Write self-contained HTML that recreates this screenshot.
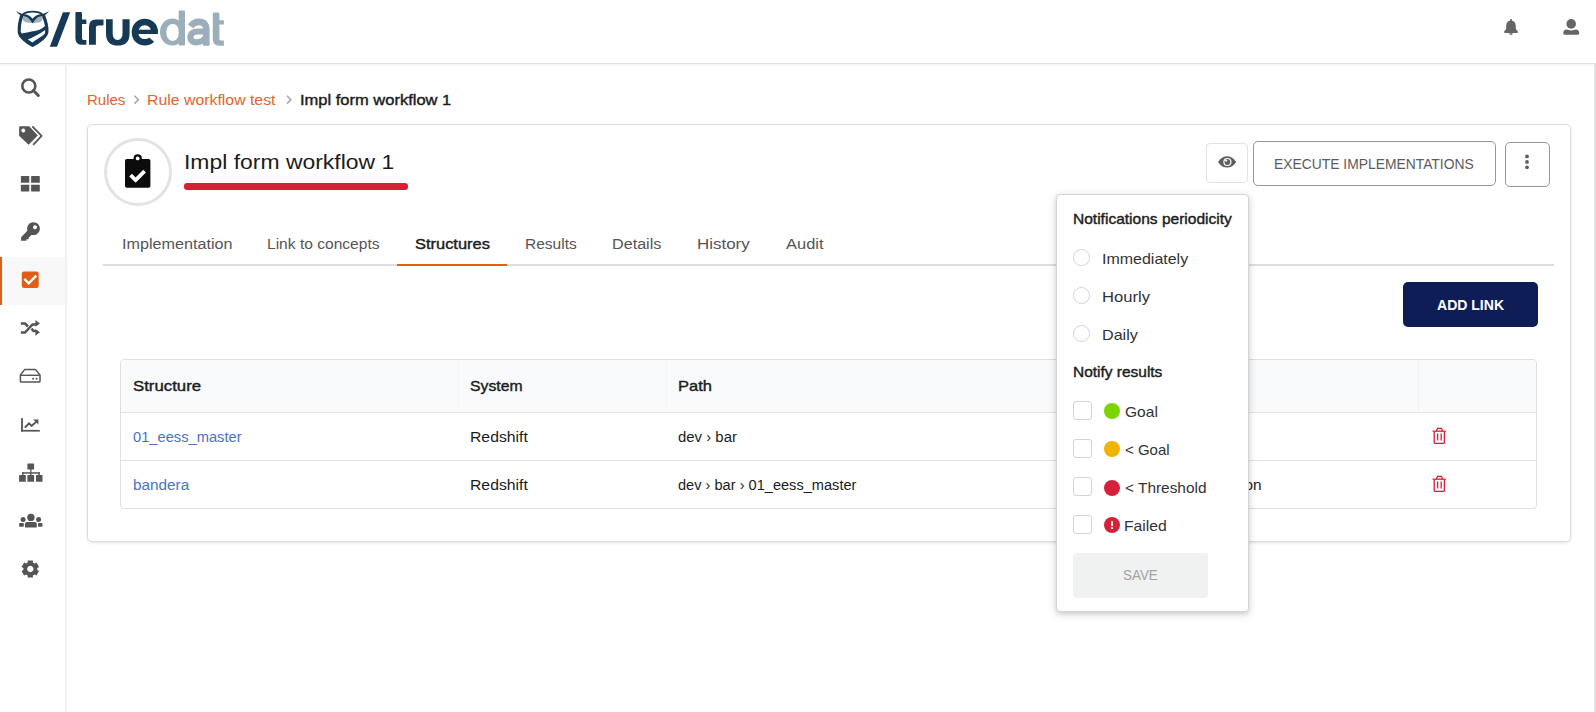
<!DOCTYPE html>
<html><head><meta charset="utf-8">
<style>
*{box-sizing:border-box;margin:0;padding:0}
html,body{width:1596px;height:712px;overflow:hidden;background:#fff;font-family:"Liberation Sans",sans-serif;color:#212121}
.a{position:absolute}
.t{position:absolute;white-space:nowrap;line-height:1;transform-origin:0 0}
svg{position:absolute;left:0;top:0;overflow:visible}
</style></head><body>
<!-- header -->
<div class="a" style="left:0;top:0;width:1596px;height:64px;border-bottom:1px solid #e2e2e2;box-shadow:0 1px 3px rgba(0,0,0,.06)"></div>
<!-- sidebar -->
<div class="a" style="left:65px;top:64px;width:1px;height:648px;background:#eeeeee;box-shadow:1px 0 0 #f6f6f6,2px 0 0 #fafafa"></div>
<div class="a" style="left:0;top:257px;width:65px;height:48px;background:#f8f8f8"></div>
<div class="a" style="left:0;top:257px;width:1.5px;height:48px;background:#e05d1a"></div>
<!-- right edge -->
<div class="a" style="left:1594px;top:64px;width:2px;height:648px;background:#e4e4e4"></div>

<!-- card -->
<div class="a" style="left:87.3px;top:124px;width:1483.7px;height:418px;border:1px solid #dcdcdc;border-radius:5px;box-shadow:0 1px 3px rgba(34,36,38,.13)"></div>
<!-- circle -->
<div class="a" style="left:104px;top:138px;width:68px;height:68px;border:3px solid #e3e3e3;border-radius:50%"></div>
<!-- red bar -->
<div class="a" style="left:184px;top:183.2px;width:224.3px;height:6.4px;background:#d42138;border-radius:3px"></div>
<!-- eye btn -->
<div class="a" style="left:1206px;top:143px;width:42px;height:40px;border:1px solid #e2e2e2;border-radius:4px"></div>
<!-- execute btn -->
<div class="a" style="left:1252.6px;top:141.2px;width:243px;height:44.6px;border:1px solid #979797;border-radius:5px"></div>
<!-- kebab btn -->
<div class="a" style="left:1504.8px;top:142.2px;width:44.8px;height:44.6px;border:1px solid #979797;border-radius:5px"></div>
<!-- tab line -->
<div class="a" style="left:103px;top:264px;width:1450.5px;height:2px;background:#dedede"></div>
<div class="a" style="left:397.3px;top:264px;width:110.2px;height:2px;background:#e26203"></div>
<!-- add link -->
<div class="a" style="left:1402.5px;top:282px;width:135px;height:45px;background:#0f1d57;border-radius:5px"></div>
<!-- table -->
<div class="a" style="left:119.6px;top:359px;width:1417.4px;height:150px;border:1px solid #e0e0e0;border-radius:4px;overflow:hidden">
  <div class="a" style="left:0;top:0;width:1416px;height:53px;background:#f9fafb;border-bottom:1px solid #e3e3e3"></div>
  <div class="a" style="left:0;top:100px;width:1416px;height:1px;background:#e3e3e3"></div>
  <div class="a" style="left:1297px;top:0;width:1px;height:53px;background:#f1f2f3"></div>
  <div class="a" style="left:337.4px;top:0;width:1px;height:52px;background:#f5f6f7"></div>
  <div class="a" style="left:545.4px;top:0;width:1px;height:52px;background:#f5f6f7"></div>
</div>

<svg width="1596" height="712" viewBox="0 0 1596 712">
  <!-- logo owl -->
  <path d="M22.4,16.6 C24.5,16.2 28,16.8 30.6,19.6 L32.6,23 C29.2,23.2 26,22.8 24.3,21.6 C22.9,20.6 22.4,19 22.4,16.6 Z" fill="#9fb2bd"/>
  <path d="M42.8,16.6 C40.7,16.2 37.2,16.8 34.6,19.6 L32.6,23 C36,23.2 39.2,22.8 40.9,21.6 C42.3,20.6 42.8,19 42.8,16.6 Z" fill="#9fb2bd"/>
  <path d="M18.6,34.8 C24,32.6 30,32 36,30.8 C40,30 42.8,28.2 46.6,24.6 L47.8,31.6 L32.6,46.4 L19.5,36.5 Z" fill="#163a56"/>
  <path d="M27.8,39.6 C33,37.2 39,34.6 45.5,29.8 L45.5,33.6 C40.5,37 36.5,39.6 32.4,42.5 Z" fill="#fff"/>
  <path d="M16.2,11.1 C19,13 22,14.2 25,14.3 C28,14.4 30.6,16.4 32.6,18.8 C34.6,16.4 37.2,14.4 40.2,14.3 C43.2,14.2 46.2,13 49.1,11.1 C47.4,14.2 44,16.3 40.6,16.5 C37.6,16.7 35,19.5 32.6,23.6 C30.2,19.5 27.6,16.7 24.6,16.5 C21.2,16.3 17.8,14.2 16.2,11.1 Z" fill="#163a56"/>
  <g fill="none" stroke="#163a56" stroke-linecap="round">
    <path d="M22.8,14.6 C26.4,10.6 38.8,10.6 42.4,14.6" stroke-width="1.9"/>
    <path d="M21.5,16.2 C20,21 18.8,26 19.3,32 C19.8,36.5 26,42 32.6,45.2 C39.2,42 46.4,36.5 46.9,31.8 C47.2,26.5 45.8,21.5 43.7,16.2" stroke-width="3.2"/>
  </g>
  <path d="M62.9,12.2 L70.2,12.2 L57,46.7 L49.8,46.7 Z" fill="#163a56"/>
  <g fill="#163a56">
    <path d="M75.4,13 Q75.4,12 76.4,12 L80.6,12 Q82,12 82,13.4 L82,19.5 L85.6,19.5 Q86.4,19.5 86.4,20.3 L86.4,24 L82,24 L82,38.6 Q82,40 83.4,40 L86.4,40 L86.4,44.8 L82,44.8 Q75.4,44.8 75.4,38.2 Z"/>
    <path d="M89,44.8 L89,26.5 Q89,19.5 96,19.5 L103.5,19.5 L103.5,24.6 Q103.5,25.5 102.6,25.5 L98.2,25.5 Q95.9,25.5 95.9,27.8 L95.9,44.8 Z"/>
    <path d="M106,19.3 L112.7,19.3 L112.7,33.5 Q112.7,40 117.6,40 Q122.5,40 122.5,33.5 L122.5,19.3 L129.6,19.3 L129.6,33.5 Q129.6,45.6 117.8,45.6 Q106,45.6 106,33.5 Z"/>
  </g>
  <g fill="none" stroke="#163a56" stroke-width="6.6">
    <path d="M151.6,39.6 C149.8,41.6 147.6,42.3 145,42.3 C138.7,42.3 135,37.7 135,32.2 C135,26.5 139,22 144.8,22 C150.6,22 154.6,26.3 154.6,32"/>
  </g>
  <rect x="135" y="29.7" width="22.9" height="4.3" fill="#163a56"/>
  <g fill="#9caeb9">
    <rect x="178.7" y="10.4" width="6.3" height="35" rx=".8"/>
    <path fill-rule="evenodd" d="M172.6,18.6 C165,18.6 160,24.5 160,32.1 C160,39.7 165,45.5 172.6,45.5 C176,45.5 178.7,44 180,42 L180,22 C178.7,20 176,18.6 172.6,18.6 Z M172.7,24 C169,24 166.4,27.5 166.4,32.4 C166.4,37.3 169,40.7 172.7,40.7 C176.4,40.7 179,37.3 179,32.4 C179,27.5 176.4,24 172.7,24 Z"/>
    <path d="M213.8,12.6 L218,12.6 Q219.4,12.6 219.4,14 L219.4,20.2 L223.1,20.2 Q223.9,20.2 223.9,21 L223.9,24.6 L219.4,24.6 L219.4,39 Q219.4,40.4 220.8,40.4 L223.9,40.4 L223.9,45.7 L219.4,45.7 Q212.8,45.7 212.8,39 L212.8,13.6 Q212.8,12.6 213.8,12.6 Z"/>
  </g>
  <g fill="none" stroke="#9caeb9">
    <path d="M190.6,26.4 C192.6,23.5 195.5,21.9 199.3,21.9 C204,21.9 206.3,24.6 206.3,29 L206.3,45.7" stroke-width="6.6"/>
    <path d="M206.3,31.5 L197.5,31.5 C193,31.5 190.4,33.6 190.4,37.4 C190.4,40.6 192.9,42.3 196.2,42.3 C200.5,42.3 204.6,40 206.3,36.5" stroke-width="6.2"/>
  </g>

  <!-- bell -->
  <g fill="#666">
    <rect x="1510.1" y="19" width="1.8" height="2.5" rx=".6"/>
    <path d="M1511,20.6 C1507.6,20.6 1506.2,23.5 1506.2,26.5 L1506.2,28.6 C1506.2,30 1504,31 1504,32 C1504,32.6 1504.5,32.9 1505,32.9 L1517,32.9 C1517.5,32.9 1518,32.6 1518,32 C1518,31 1515.8,30 1515.8,28.6 L1515.8,26.5 C1515.8,23.5 1514.4,20.6 1511,20.6 Z"/>
    <path d="M1509.2,33.3 A1.8,1.8 0 0 0 1512.8,33.3 Z"/>
  </g>
  <!-- user -->
  <g fill="#666">
    <circle cx="1571.2" cy="23.9" r="4.8"/>
    <path d="M1566.6,29.6 C1568,29.6 1569,30.4 1571.2,30.4 C1573.4,30.4 1574.4,29.6 1575.8,29.6 C1577.8,29.6 1579.2,31 1579.2,33 L1579.2,33.6 C1579.2,34.3 1578.7,34.8 1578,34.8 L1564.5,34.8 C1563.8,34.8 1563.3,34.3 1563.3,33.6 L1563.3,33 C1563.3,31 1564.6,29.6 1566.6,29.6 Z"/>
  </g>

  <!-- sidebar icons -->
  <g fill="#555">
    <!-- search -->
    <circle cx="28.8" cy="86" r="6.5" fill="none" stroke="#555" stroke-width="2.6"/>
    <path d="M33.3,90.5 L38.3,95.5" stroke="#555" stroke-width="3" stroke-linecap="round"/>
    <!-- tags -->
    <path fill-rule="evenodd" d="M20.3,126.3 L29.2,126.3 L37.8,135.4 L28.6,144.8 L19.1,135.8 L19.1,127.5 Q19.1,126.3 20.3,126.3 Z M23.3,128.5 A2,2 0 1 0 23.31,128.5 Z"/>
    <path d="M32.3,126.3 L41.6,135.9 L33.1,144.8" fill="none" stroke="#555" stroke-width="1.8" stroke-linejoin="round"/>
    <!-- grid -->
    <rect x="20.9" y="175.9" width="8.4" height="6.9" rx=".6"/>
    <rect x="31.1" y="175.9" width="8.7" height="6.9" rx=".6"/>
    <rect x="20.9" y="184.7" width="8.4" height="6.9" rx=".6"/>
    <rect x="31.1" y="184.7" width="8.7" height="6.9" rx=".6"/>
    <!-- key -->
    <path fill-rule="evenodd" d="M33.5,222.2 A6.4,6.4 0 1 1 33.49,222.2 Z M35,225.2 A2,2 0 1 0 35.01,225.2 Z"/>
    <path d="M27.6,230.6 L21.1,237.3 L21.1,240.8 L26.4,240.8 L26.4,239.3 L28.6,239.3 L28.6,237.8 L33,233.6 Z"/>
    <!-- sidebar check (orange) -->
    <rect x="21.8" y="271.5" width="16.9" height="16.5" rx="2.2" fill="#e05d1a"/>
    <path d="M25.2,279.8 L28.8,283.3 L35.4,276.5" fill="none" stroke="#fff" stroke-width="2.4" stroke-linecap="square"/>
    <!-- shuffle -->
    <path d="M20.9,323.5 L25,323.5 L28,326.5" fill="none" stroke="#555" stroke-width="2.5"/>
    <path d="M20.9,332.5 L25,332.5 L32.5,324.4 L36,324.4" fill="none" stroke="#555" stroke-width="2.5"/>
    <path d="M31.5,328.6 L33.5,331 L36,331" fill="none" stroke="#555" stroke-width="2.5"/>
    <path d="M35.4,319.9 L40,323.4 L35.4,326.8 Z"/>
    <path d="M35.4,328.9 L40,332.3 L35.4,335.8 Z"/>
    <!-- hdd -->
    <path d="M24.6,369.6 L35.6,369.6 L40,375 L40,381.2 Q40,382 39.2,382 L21,382 Q20.4,382 20.4,381.2 L20.4,375 Z" fill="none" stroke="#555" stroke-width="1.5" stroke-linejoin="round"/>
    <path d="M20.6,375.3 L39.8,375.3" stroke="#555" stroke-width="1.4"/>
    <circle cx="33.1" cy="378.8" r="1"/><circle cx="36.6" cy="378.8" r="1"/>
    <!-- chart -->
    <rect x="21.1" y="418.1" width="1.8" height="13.5"/>
    <rect x="21.1" y="429.9" width="18.7" height="1.7"/>
    <path d="M25.4,427 L29.2,423.3 L31.5,426 L36.4,421.6" fill="none" stroke="#555" stroke-width="1.9" stroke-linecap="round" stroke-linejoin="round"/>
    <path d="M33.1,419.4 L38.4,419.4 L38.4,424.6 Z"/>
    <!-- sitemap -->
    <rect x="27.4" y="463.5" width="6.7" height="6.1" rx=".5"/>
    <rect x="30.2" y="469" width="1.3" height="6"/>
    <rect x="22.1" y="472.2" width="17.7" height="1.5"/>
    <rect x="22.1" y="472.2" width="1.4" height="3.5"/>
    <rect x="38.4" y="472.2" width="1.4" height="3.5"/>
    <rect x="19.1" y="475.1" width="6.7" height="6.7" rx=".5"/>
    <rect x="27.4" y="475.1" width="6.7" height="6.7" rx=".5"/>
    <rect x="36" y="475.1" width="6.5" height="6.7" rx=".5"/>
    <!-- users -->
    <circle cx="30.9" cy="517.4" r="3.7"/>
    <path d="M27,522.1 L34.8,522.1 Q36.8,522.1 36.8,524.1 L36.8,527.6 L25,527.6 L25,524.1 Q25,522.1 27,522.1 Z"/>
    <circle cx="23.1" cy="519.6" r="2.5"/>
    <circle cx="38.6" cy="519.6" r="2.5"/>
    <rect x="19.1" y="523.1" width="4.7" height="3.6" rx=".8"/>
    <rect x="38" y="523.1" width="4.5" height="3.6" rx=".8"/>
    <!-- cog -->
    <path fill-rule="evenodd" d="M32.92,562.51 L32.93,560.39 L27.67,560.39 L27.68,562.51 L25.99,563.48 L24.16,562.42 L21.53,566.98 L23.37,568.03 L23.37,569.97 L21.53,571.02 L24.16,575.58 L25.99,574.52 L27.68,575.49 L27.67,577.61 L32.93,577.61 L32.92,575.49 L34.61,574.52 L36.44,575.58 L39.07,571.02 L37.23,569.97 L37.23,568.03 L39.07,566.98 L36.44,562.42 L34.61,563.48Z M30.3,565.8 A3.2,3.2 0 1 0 30.31,565.8 Z"/>
  </g>

  <!-- breadcrumb chevrons -->
  <path d="M134.5,95.8 L138.3,99.7 L134.5,103.6" fill="none" stroke="#a8a8a8" stroke-width="1.6"/>
  <path d="M287,95.8 L290.8,99.7 L287,103.6" fill="none" stroke="#a8a8a8" stroke-width="1.6"/>

  <!-- clipboard -->
  <g fill="#0c0c0c">
    <rect x="125" y="158.9" width="25.4" height="28.9" rx="1.8"/>
    <circle cx="137.7" cy="158.3" r="4.1"/>
  </g>
  <circle cx="137.7" cy="158.4" r="1.9" fill="#fff"/>
  <path d="M130.6,175.2 L135.6,180.1 L144.6,171.1" fill="none" stroke="#fff" stroke-width="3.8" stroke-linecap="butt" stroke-linejoin="miter"/>

  <!-- eye -->
  <path d="M1218,161.9 C1221,157.6 1224,156.2 1227.1,156.2 C1230.2,156.2 1233.2,157.6 1236.2,161.9 C1233.2,166.1 1230.2,167.5 1227.1,167.5 C1224,167.5 1221,166.1 1218,161.9 Z" fill="#5e5e5e"/>
  <circle cx="1227.4" cy="162" r="4.1" fill="#fff"/>
  <circle cx="1227.4" cy="162" r="2.9" fill="#5e5e5e"/>
  <circle cx="1226.2" cy="160.6" r="1.1" fill="#fff"/>
  <!-- kebab dots -->
  <g fill="#5e5e5e"><circle cx="1527" cy="156.4" r="1.9"/><circle cx="1527" cy="161.9" r="1.9"/><circle cx="1527" cy="167.3" r="1.9"/></g>

  <!-- trash -->
  <g fill="none" stroke="#d81f3a" stroke-width="1.3">
    <path d="M1432.6,431.2 L1445.8,431.2"/>
    <path d="M1436.4,431 L1437.5,428.4 L1441.5,428.4 L1442.6,431"/>
    <path d="M1434.2,431.6 L1434.2,442.6 Q1434.2,443.3 1434.9,443.3 L1443.7,443.3 Q1444.4,443.3 1444.4,442.6 L1444.4,431.6"/>
    <path d="M1437.6,433.6 L1437.6,440.6 M1441.2,433.6 L1441.2,440.6"/>
  </g>
  <g fill="none" stroke="#d81f3a" stroke-width="1.3" transform="translate(0 48)">
    <path d="M1432.6,431.2 L1445.8,431.2"/>
    <path d="M1436.4,431 L1437.5,428.4 L1441.5,428.4 L1442.6,431"/>
    <path d="M1434.2,431.6 L1434.2,442.6 Q1434.2,443.3 1434.9,443.3 L1443.7,443.3 Q1444.4,443.3 1444.4,442.6 L1444.4,431.6"/>
    <path d="M1437.6,433.6 L1437.6,440.6 M1441.2,433.6 L1441.2,440.6"/>
  </g>
</svg>

<div class="t" style="left:86.63px;top:91px;line-height:17px;font-size:15.0px;font-weight:400;color:#e3632d;transform:scaleX(0.9998)">Rules</div>
<div class="t" style="left:147.46px;top:91px;line-height:17px;font-size:15.0px;font-weight:400;color:#e3632d;transform:scaleX(1.0557)">Rule workflow test</div>
<div class="t" style="left:300.01px;top:92px;line-height:16px;font-size:14.6px;font-weight:400;color:#1b1c1d;transform:scaleX(1.1307);-webkit-text-stroke:0.4px #1b1c1d">Impl form workflow 1</div>
<div class="t" style="left:183.51px;top:150px;line-height:23px;font-size:20.8px;font-weight:400;color:#1b1c1d;transform:scaleX(1.1023)">Impl form workflow 1</div>
<div class="t" style="left:121.64px;top:235px;line-height:17px;font-size:15.36px;font-weight:400;color:#555555;transform:scaleX(1.0519)">Implementation</div>
<div class="t" style="left:266.98px;top:235px;line-height:17px;font-size:15.36px;font-weight:400;color:#555555;transform:scaleX(1.0135)">Link to concepts</div>
<div class="t" style="left:415.19px;top:235px;line-height:17px;font-size:15.0px;font-weight:400;color:#1b1c1d;transform:scaleX(1.0961);-webkit-text-stroke:0.4px #1b1c1d">Structures</div>
<div class="t" style="left:525.29px;top:235px;line-height:17px;font-size:15.36px;font-weight:400;color:#555555;transform:scaleX(1.0093)">Results</div>
<div class="t" style="left:612.04px;top:235px;line-height:17px;font-size:15.36px;font-weight:400;color:#555555;transform:scaleX(1.0515)">Details</div>
<div class="t" style="left:696.68px;top:235px;line-height:17px;font-size:15.36px;font-weight:400;color:#555555;transform:scaleX(1.1032)">History</div>
<div class="t" style="left:785.70px;top:235px;line-height:17px;font-size:15.36px;font-weight:400;color:#555555;transform:scaleX(1.0724)">Audit</div>
<div class="t" style="left:1273.82px;top:156px;line-height:16px;font-size:13.9px;font-weight:400;color:#5c5c5c;transform:scaleX(0.9979)">EXECUTE IMPLEMENTATIONS</div>
<div class="t" style="left:1436.78px;top:297px;line-height:16px;font-size:14.1px;font-weight:700;color:#ffffff;transform:scaleX(0.9956)">ADD LINK</div>
<div class="t" style="left:132.88px;top:377px;line-height:17px;font-size:15.0px;font-weight:400;color:#1b1c1d;transform:scaleX(1.1191);-webkit-text-stroke:0.4px #1b1c1d">Structure</div>
<div class="t" style="left:469.51px;top:377px;line-height:17px;font-size:15.0px;font-weight:400;color:#1b1c1d;transform:scaleX(1.0499);-webkit-text-stroke:0.4px #1b1c1d">System</div>
<div class="t" style="left:677.51px;top:377px;line-height:17px;font-size:15.0px;font-weight:400;color:#1b1c1d;transform:scaleX(1.0991);-webkit-text-stroke:0.4px #1b1c1d">Path</div>
<div class="t" style="left:132.94px;top:428px;line-height:17px;font-size:15.36px;font-weight:400;color:#4a72c4;transform:scaleX(0.9557)">01_eess_master</div>
<div class="t" style="left:469.77px;top:428px;line-height:17px;font-size:15.36px;font-weight:400;color:#1b1c1d;transform:scaleX(1.0254)">Redshift</div>
<div class="t" style="left:678.33px;top:428px;line-height:17px;font-size:15.36px;font-weight:400;color:#1b1c1d;transform:scaleX(0.9724)">dev › bar</div>
<div class="t" style="left:133.04px;top:476px;line-height:17px;font-size:15.36px;font-weight:400;color:#4a72c4;transform:scaleX(0.9963)">bandera</div>
<div class="t" style="left:469.77px;top:476px;line-height:17px;font-size:15.36px;font-weight:400;color:#1b1c1d;transform:scaleX(1.0254)">Redshift</div>
<div class="t" style="left:678.34px;top:476px;line-height:17px;font-size:15.36px;font-weight:400;color:#1b1c1d;transform:scaleX(0.9500)">dev › bar › 01_eess_master</div>
<div class="t" style="left:1240.94px;top:476px;line-height:17px;font-size:15.36px;font-weight:400;color:#1b1c1d;transform:scaleX(0.9960)">ion</div>
<!-- popup -->
<div class="a" style="left:1056px;top:194px;width:193px;height:418px;background:#fff;border:1px solid #d4d4d5;border-radius:4px;box-shadow:0 2px 4px 0 rgba(34,36,38,.12),0 2px 10px 0 rgba(34,36,38,.15)">
</div>
<div class="a" style="left:1073.1px;top:249px;width:16.7px;height:16.7px;border:1px solid #d4d4d5;border-radius:50%"></div>
<div class="a" style="left:1073.1px;top:287px;width:16.7px;height:16.7px;border:1px solid #d4d4d5;border-radius:50%"></div>
<div class="a" style="left:1073.1px;top:325px;width:16.7px;height:16.7px;border:1px solid #d4d4d5;border-radius:50%"></div>
<div class="a" style="left:1073.4px;top:401.1px;width:18.3px;height:19px;border:1px solid #d4d4d5;border-radius:3px"></div>
<div class="a" style="left:1073.4px;top:439.1px;width:18.3px;height:19px;border:1px solid #d4d4d5;border-radius:3px"></div>
<div class="a" style="left:1073.4px;top:477.1px;width:18.3px;height:19px;border:1px solid #d4d4d5;border-radius:3px"></div>
<div class="a" style="left:1073.4px;top:515.1px;width:18.3px;height:19px;border:1px solid #d4d4d5;border-radius:3px"></div>
<div class="a" style="left:1104px;top:403px;width:16px;height:16px;border-radius:50%;background:#7ad400"></div>
<div class="a" style="left:1104px;top:441px;width:16px;height:16px;border-radius:50%;background:#f0b400"></div>
<div class="a" style="left:1104px;top:479.5px;width:16px;height:16px;border-radius:50%;background:#d6213b"></div>
<div class="a" style="left:1104px;top:516.8px;width:16px;height:16px;border-radius:50%;background:#d6213b"></div>
<div class="a" style="left:1110.7px;top:520.6px;width:2.7px;height:5.9px;border-radius:1px 1px .6px .6px;background:#fff"></div>
<div class="a" style="left:1110.8px;top:527.2px;width:2.5px;height:2.2px;border-radius:.5px;background:#fff"></div>
<div class="a" style="left:1072.9px;top:553px;width:135px;height:44.8px;background:#f0f1f1;border-radius:4px"></div>

<div class="t" style="left:1072.79px;top:211px;line-height:16px;font-size:14.6px;font-weight:400;color:#1b1c1d;transform:scaleX(1.0643);-webkit-text-stroke:0.4px #1b1c1d">Notifications periodicity</div>
<div class="t" style="left:1102.35px;top:251px;line-height:16px;font-size:14.8px;font-weight:400;color:#333333;transform:scaleX(1.0798)">Immediately</div>
<div class="t" style="left:1102.00px;top:289px;line-height:16px;font-size:14.8px;font-weight:400;color:#333333;transform:scaleX(1.1223)">Hourly</div>
<div class="t" style="left:1102.04px;top:327px;line-height:16px;font-size:14.8px;font-weight:400;color:#333333;transform:scaleX(1.0901)">Daily</div>
<div class="t" style="left:1073.09px;top:364px;line-height:16px;font-size:14.6px;font-weight:400;color:#1b1c1d;transform:scaleX(1.0594);-webkit-text-stroke:0.4px #1b1c1d">Notify results</div>
<div class="t" style="left:1124.87px;top:404px;line-height:16px;font-size:14.8px;font-weight:400;color:#333333;transform:scaleX(1.0509)">Goal</div>
<div class="t" style="left:1125.30px;top:442px;line-height:16px;font-size:14.8px;font-weight:400;color:#333333;transform:scaleX(1.0130)">&lt; Goal</div>
<div class="t" style="left:1125.28px;top:480px;line-height:16px;font-size:14.8px;font-weight:400;color:#333333;transform:scaleX(1.0410)">&lt; Threshold</div>
<div class="t" style="left:1124.37px;top:518px;line-height:16px;font-size:14.8px;font-weight:400;color:#333333;transform:scaleX(1.0620)">Failed</div>
<div class="t" style="left:1123.18px;top:567px;line-height:16px;font-size:14.2px;font-weight:400;color:#a3a3a3;transform:scaleX(0.9444)">SAVE</div>

</body></html>
